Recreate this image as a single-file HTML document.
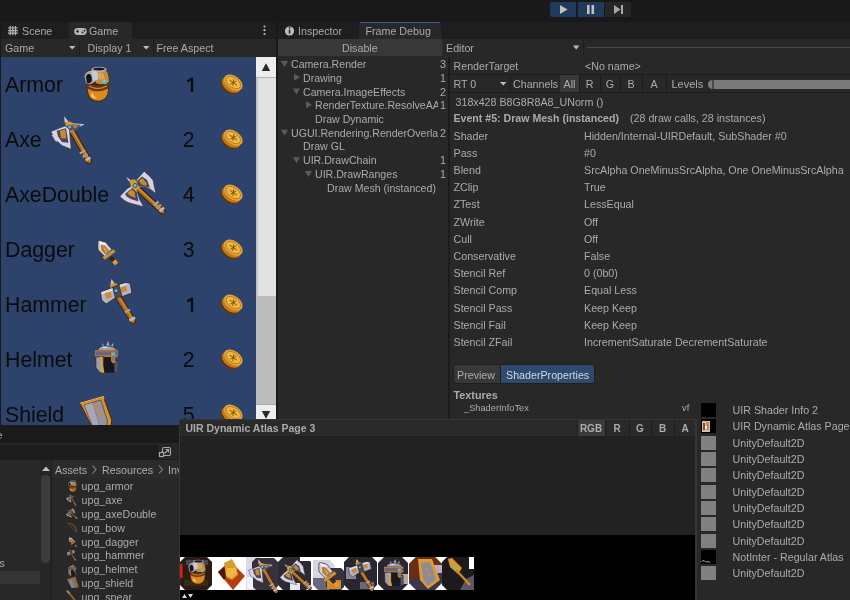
<!DOCTYPE html>
<html><head><meta charset="utf-8">
<style>
*{margin:0;padding:0;box-sizing:border-box}
html,body{width:850px;height:600px;overflow:hidden;background:#191919;font-family:"Liberation Sans",sans-serif;color:#ababab}
#w{position:absolute;left:0;top:0;width:850px;height:600px;overflow:hidden;will-change:transform}
.a{position:absolute}
.t{position:absolute;white-space:nowrap;line-height:1}
svg{position:absolute;left:0;top:0;overflow:visible}
</style></head><body><div id="w">
<div class="a" style="left:550px;top:2px;width:26px;height:15px;background:#1f3a5c;border-radius:2px 0 0 2px"></div>
<div class="a" style="left:578px;top:2px;width:26px;height:15px;background:#1f3a5c"></div>
<div class="a" style="left:605px;top:2px;width:26px;height:15px;background:#262626;border-radius:0 2px 2px 0"></div>
<svg width="850" height="20">
<path d="M560 5 L567.5 9.5 L560 14 Z" fill="#c0c0c0"/>
<rect x="587" y="5" width="2.6" height="9" fill="#c0c0c0"/><rect x="591.5" y="5" width="2.6" height="9" fill="#c0c0c0"/>
<path d="M614 5 L620.5 9.5 L614 14 Z" fill="#a8a8a8"/><rect x="621" y="5" width="2" height="9" fill="#a8a8a8"/>
</svg>
<div class="a" style="left:1px;top:22px;width:275px;height:17px;background:#1e1e1e;border-radius:3px 3px 0 0"></div>
<div class="a" style="left:69px;top:22px;width:63px;height:17px;background:#282828;border-radius:3px 3px 0 0"></div>
<div class="t" style="left:22px;top:26px;font-size:10.7px">Scene</div>
<div class="t" style="left:89px;top:26px;font-size:10.7px">Game</div>
<div class="a" style="left:1px;top:39px;width:275px;height:18px;background:#282828"></div>
<div class="a" style="left:79px;top:39px;width:1px;height:18px;background:#1e1e1e"></div>
<div class="a" style="left:153px;top:39px;width:1px;height:18px;background:#1e1e1e"></div>
<div class="t" style="left:5px;top:43px;font-size:10.7px">Game</div>
<div class="t" style="left:87.5px;top:43px;font-size:10.7px">Display 1</div>
<div class="t" style="left:156.5px;top:43px;font-size:10.7px">Free Aspect</div>
<svg width="850" height="60">
<g stroke="#b4b4b4" stroke-width="1.2" fill="none">
<path d="M10.2 26 V35.2 M12.8 26 V35.2 M15.5 26 V35.2 M8 28 H17.8 M8 30.6 H17.8 M8 33.2 H17.8"/>
</g>
<rect x="74.2" y="28" width="12.5" height="6.9" rx="3.45" fill="#b4b4b4"/>
<path d="M76 31.3 H79 M77.5 29.8 V32.8" stroke="#282828" stroke-width="1"/>
<circle cx="84.4" cy="30.6" r="0.9" fill="#282828"/><circle cx="82.6" cy="32.4" r="0.9" fill="#282828"/>
<circle cx="264.5" cy="26.5" r="1.1" fill="#bdbdbd"/><circle cx="264.5" cy="30.2" r="1.1" fill="#bdbdbd"/><circle cx="264.5" cy="34" r="1.1" fill="#bdbdbd"/>
<path d="M69 46 H75.5 L72.25 49.5 Z" fill="#bdbdbd"/>
<path d="M143 46 H149.5 L146.25 49.5 Z" fill="#bdbdbd"/>
</svg>
<div class="a" style="left:1px;top:57px;width:255px;height:368px;background:#2e436c"></div>
<div class="a" style="left:256px;top:57px;width:20px;height:368px;background:#bcbcbc"></div>
<div class="a" style="left:256px;top:57px;width:20px;height:20px;background:#eeeeee"></div>
<div class="a" style="left:256px;top:77px;width:20px;height:1px;background:#b4b4b4"></div>
<div class="a" style="left:256px;top:78px;width:20px;height:218px;background:#e2e2e2"></div>
<div class="a" style="left:256px;top:78px;width:1.5px;height:218px;background:#c4c4c4"></div>
<div class="a" style="left:256px;top:404px;width:20px;height:1px;background:#a8a8a8"></div>
<div class="a" style="left:256px;top:405px;width:20px;height:20px;background:#eeeeee"></div>
<svg width="850" height="600">
<path d="M261.8 71 L266 63.2 L270.2 71 Z" fill="#2a2a2a"/>
<path d="M261.8 411 L270.2 411 L266 418.8 Z" fill="#2a2a2a"/>
</svg>
<div class="a" style="left:1px;top:57px;width:255px;height:368px;overflow:hidden">
<div class="t" style="left:4px;top:18px;font-size:21.3px;color:#0b0b0b">Armor</div>
<svg width="850" height="600" style="left:-1px;top:-57px"><path d="M192 92 V78.6 L187.3 81.4" stroke="#0b0b0b" stroke-width="2.3" fill="none" stroke-linejoin="round"/></svg>
<div class="t" style="left:4px;top:73px;font-size:21.3px;color:#0b0b0b">Axe</div>
<div class="t" style="right:61.5px;top:73px;font-size:21.3px;color:#0b0b0b">2</div>
<div class="t" style="left:4px;top:128px;font-size:21.3px;color:#0b0b0b">AxeDouble</div>
<div class="t" style="right:61.5px;top:128px;font-size:21.3px;color:#0b0b0b">4</div>
<div class="t" style="left:4px;top:183px;font-size:21.3px;color:#0b0b0b">Dagger</div>
<div class="t" style="right:61.5px;top:183px;font-size:21.3px;color:#0b0b0b">3</div>
<div class="t" style="left:4px;top:238px;font-size:21.3px;color:#0b0b0b">Hammer</div>
<svg width="850" height="600" style="left:-1px;top:-57px"><path d="M192 312 V298.6 L187.3 301.4" stroke="#0b0b0b" stroke-width="2.3" fill="none" stroke-linejoin="round"/></svg>
<div class="t" style="left:4px;top:293px;font-size:21.3px;color:#0b0b0b">Helmet</div>
<div class="t" style="right:61.5px;top:293px;font-size:21.3px;color:#0b0b0b">2</div>
<div class="t" style="left:4px;top:348px;font-size:21.3px;color:#0b0b0b">Shield</div>
<div class="t" style="right:61.5px;top:348px;font-size:21.3px;color:#0b0b0b">5</div>
<svg width="255" height="368"><g transform="translate(-1,-57)"><g transform="translate(232.3,83.6)">
<g transform="translate(-2.2,2.8) rotate(35)"><ellipse rx="10.4" ry="6.6" fill="#6a3408"/></g>
<g transform="translate(-1.1,1.2) rotate(35)"><ellipse rx="10.4" ry="6.6" fill="#c27c1c"/></g>
<g transform="translate(1,-1) rotate(35)"><ellipse rx="10.4" ry="6.6" fill="#e4a838"/><ellipse rx="8.2" ry="4.9" fill="#f0b840" stroke="#b47418" stroke-width="0.8"/>
<path d="M-4.5 0 L4.5 0 M-1.5 -3 L1.5 3 M1.5 -3 L-1.5 3" stroke="#7a4a10" stroke-width="0.85"/></g>
</g><g transform="translate(232.3,138.6)">
<g transform="translate(-2.2,2.8) rotate(35)"><ellipse rx="10.4" ry="6.6" fill="#6a3408"/></g>
<g transform="translate(-1.1,1.2) rotate(35)"><ellipse rx="10.4" ry="6.6" fill="#c27c1c"/></g>
<g transform="translate(1,-1) rotate(35)"><ellipse rx="10.4" ry="6.6" fill="#e4a838"/><ellipse rx="8.2" ry="4.9" fill="#f0b840" stroke="#b47418" stroke-width="0.8"/>
<path d="M-4.5 0 L4.5 0 M-1.5 -3 L1.5 3 M1.5 -3 L-1.5 3" stroke="#7a4a10" stroke-width="0.85"/></g>
</g><g transform="translate(232.3,193.6)">
<g transform="translate(-2.2,2.8) rotate(35)"><ellipse rx="10.4" ry="6.6" fill="#6a3408"/></g>
<g transform="translate(-1.1,1.2) rotate(35)"><ellipse rx="10.4" ry="6.6" fill="#c27c1c"/></g>
<g transform="translate(1,-1) rotate(35)"><ellipse rx="10.4" ry="6.6" fill="#e4a838"/><ellipse rx="8.2" ry="4.9" fill="#f0b840" stroke="#b47418" stroke-width="0.8"/>
<path d="M-4.5 0 L4.5 0 M-1.5 -3 L1.5 3 M1.5 -3 L-1.5 3" stroke="#7a4a10" stroke-width="0.85"/></g>
</g><g transform="translate(232.3,248.6)">
<g transform="translate(-2.2,2.8) rotate(35)"><ellipse rx="10.4" ry="6.6" fill="#6a3408"/></g>
<g transform="translate(-1.1,1.2) rotate(35)"><ellipse rx="10.4" ry="6.6" fill="#c27c1c"/></g>
<g transform="translate(1,-1) rotate(35)"><ellipse rx="10.4" ry="6.6" fill="#e4a838"/><ellipse rx="8.2" ry="4.9" fill="#f0b840" stroke="#b47418" stroke-width="0.8"/>
<path d="M-4.5 0 L4.5 0 M-1.5 -3 L1.5 3 M1.5 -3 L-1.5 3" stroke="#7a4a10" stroke-width="0.85"/></g>
</g><g transform="translate(232.3,303.6)">
<g transform="translate(-2.2,2.8) rotate(35)"><ellipse rx="10.4" ry="6.6" fill="#6a3408"/></g>
<g transform="translate(-1.1,1.2) rotate(35)"><ellipse rx="10.4" ry="6.6" fill="#c27c1c"/></g>
<g transform="translate(1,-1) rotate(35)"><ellipse rx="10.4" ry="6.6" fill="#e4a838"/><ellipse rx="8.2" ry="4.9" fill="#f0b840" stroke="#b47418" stroke-width="0.8"/>
<path d="M-4.5 0 L4.5 0 M-1.5 -3 L1.5 3 M1.5 -3 L-1.5 3" stroke="#7a4a10" stroke-width="0.85"/></g>
</g><g transform="translate(232.3,358.6)">
<g transform="translate(-2.2,2.8) rotate(35)"><ellipse rx="10.4" ry="6.6" fill="#6a3408"/></g>
<g transform="translate(-1.1,1.2) rotate(35)"><ellipse rx="10.4" ry="6.6" fill="#c27c1c"/></g>
<g transform="translate(1,-1) rotate(35)"><ellipse rx="10.4" ry="6.6" fill="#e4a838"/><ellipse rx="8.2" ry="4.9" fill="#f0b840" stroke="#b47418" stroke-width="0.8"/>
<path d="M-4.5 0 L4.5 0 M-1.5 -3 L1.5 3 M1.5 -3 L-1.5 3" stroke="#7a4a10" stroke-width="0.85"/></g>
</g><g transform="translate(232.3,413.6)">
<g transform="translate(-2.2,2.8) rotate(35)"><ellipse rx="10.4" ry="6.6" fill="#6a3408"/></g>
<g transform="translate(-1.1,1.2) rotate(35)"><ellipse rx="10.4" ry="6.6" fill="#c27c1c"/></g>
<g transform="translate(1,-1) rotate(35)"><ellipse rx="10.4" ry="6.6" fill="#e4a838"/><ellipse rx="8.2" ry="4.9" fill="#f0b840" stroke="#b47418" stroke-width="0.8"/>
<path d="M-4.5 0 L4.5 0 M-1.5 -3 L1.5 3 M1.5 -3 L-1.5 3" stroke="#7a4a10" stroke-width="0.85"/></g>
</g>
<path d="M86 76 Q84 72 89 70.5 L92 68 Q99 66 106 68 L107 71.5 Q110 75 109.5 82 L108.5 92 Q106 101.8 98 101.8 Q89 101.5 87.5 94 L86.5 88 Z" fill="#4a2606"/>
<path d="M95 71 L106 70.5 Q109 74 109 82 Q101 86 96 83 Z" fill="#c48a3c"/>
<path d="M97 73 L103 72.5 L105 79 L99.5 80 Z" fill="#dcaa60" opacity="0.8"/>
<path d="M86.5 82 Q97 90 109 82 L108.6 87.5 Q97 95 87 87.5 Z" fill="#6a3a10"/>
<path d="M87.4 88.5 Q97 94 108.3 88.5 L107.3 94 Q105 100.8 98 100.8 Q90.5 100.5 88.8 94.5 Z" fill="#dc8a20"/>
<path d="M92 92 Q94 97 97 98 Q93 99 91 96 Z" fill="#f8c878"/>
<path d="M89 86 Q97 91 107 86" stroke="#f0b050" stroke-width="0.8" fill="none"/>
<path d="M84.5 76.5 Q85 71.5 91 70.5 L97.5 71.5 L98 79.5 Q94 83 91 84 L86 83.5 Z" fill="#a4a4b2"/>
<path d="M91 70.5 L97.5 71.5 L98 79.5 Q95 81 93 80 Z" fill="#c8c8d4"/>
<path d="M86 77 Q86.5 73.5 90 74 Q92.2 76 91.8 81 Q90.5 83.8 87 83.2 Z" fill="#141418"/>
<ellipse cx="99" cy="69.3" rx="7.6" ry="2.6" fill="#b4b4c0"/>
<ellipse cx="99" cy="69" rx="6" ry="1.5" fill="#18181c"/>
<circle cx="104.8" cy="81.6" r="2.7" fill="#c8a050"/>
<circle cx="104.8" cy="81.6" r="2.1" fill="#3ab8e8"/>
<circle cx="104.2" cy="81" r="0.8" fill="#a8ecff"/>
<path d="M72 131 L89 161" stroke="#2a1608" stroke-width="5.800000000000001" stroke-linecap="round"/><path d="M72 131 L89 161" stroke="#a8681c" stroke-width="4.4" stroke-linecap="round"/><path d="M72.4 130.5 L89.4 160.5" stroke="#d8953a" stroke-width="1.1" stroke-linecap="round"/><path d="M69.5 131.5 L75.5 128" stroke="#d89a30" stroke-width="3" stroke-linecap="butt"/><path d="M79.8 153.5 L85.3 150.3" stroke="#a0a0b0" stroke-width="2.2" stroke-linecap="butt"/><path d="M82.8 157 L87.5 154" stroke="#c09050" stroke-width="3" stroke-linecap="butt"/><path d="M85.5 160.5 L90.5 157.5" stroke="#b8b8c4" stroke-width="2.6" stroke-linecap="butt"/>
<path d="M64.2 116.3 L68.6 121.8 L64.6 122.6 Z" fill="#c8c8d4"/>
<path d="M68 123.5 L83.5 124.5 L76 129.8 L70 131 Z" fill="#5a5468"/>
<path d="M68 123.5 L83.5 124.5 L80 126" stroke="#c8c8d8" stroke-width="1" fill="none"/>
<path d="M72.5 125.2 L78.5 125.6 L74.5 128.5 Z" fill="#c88a2c"/>
<path d="M50.7 131.6 L64.7 126 L69.3 128.3 L71.2 149.3 L61.9 145.6 L58 142 L55.5 141.5 L54.4 140 L53 137.5 L51.5 135.5 L52.5 134.5 Z" fill="#d6d2e2" stroke="#2a2636" stroke-width="0.6"/>
<path d="M56.7 130.7 L66 128.3 L68.4 142.8 L61.9 141.9 L58.1 136.3 Z" fill="#4a4558"/>
<path d="M59.8 130.8 L65.3 129.6 L66.2 138.6 L61.2 138.2 Z" fill="#c88a2c"/>
<path d="M65 122.5 Q69 120.5 72.8 123 L71.8 126.8 L66 126.2 Z" fill="#d89a30"/>
<circle cx="69.8" cy="127" r="2.3" fill="#2a2a3a"/>
<circle cx="69.8" cy="127" r="1.7" fill="#40c8f0"/>
<path d="M137 188 L162.5 211.5" stroke="#2a1608" stroke-width="5.800000000000001" stroke-linecap="round"/><path d="M137 188 L162.5 211.5" stroke="#a8681c" stroke-width="4.4" stroke-linecap="round"/><path d="M137.4 187.5 L162.9 211.0" stroke="#d8953a" stroke-width="1.1" stroke-linecap="round"/><path d="M134.5 189.5 L140.5 185.5" stroke="#d89a30" stroke-width="3" stroke-linecap="butt"/><path d="M154 205.5 L158.5 201.5" stroke="#a0a0b0" stroke-width="2.4" stroke-linecap="butt"/><path d="M156.5 208.5 L161 204.5" stroke="#c09050" stroke-width="3" stroke-linecap="butt"/><path d="M159.5 211.5 L164 207.5" stroke="#b8b8c4" stroke-width="2.6" stroke-linecap="butt"/>
<path d="M126 176.8 L130.7 179.9 L129 181.6 Z" fill="#c8c8d4"/>
<path d="M136.4 179.9 L144.2 171.2 L146 173 L148.1 174.7 L150 176.5 L153.3 180.7 L154 185 L155.9 193.7 L150.7 189.4 L144.6 186.8 L139.4 186.8 Z" fill="#d6d2e2" stroke="#2a2636" stroke-width="0.6"/>
<path d="M137.2 180.7 L142 176.4 L147.2 179.9 L149.8 187.7 L143.7 186.4 L139 185.9 Z" fill="#4a4558"/>
<path d="M139 180.7 L142.4 178.1 L146.8 183.3 L146.3 185.9 L141.1 184.2 Z" fill="#c88a2c"/>
<path d="M119.9 196.3 L127.3 188.5 L132.5 185.5 L136.8 190.3 L139.4 198.9 L143.7 206.7 L133.3 204.1 L128 202.5 L124.7 200.7 L122 198.5 Z" fill="#d6d2e2" stroke="#2a2636" stroke-width="0.6"/>
<path d="M125.1 193.7 L132.5 187.7 L136.8 192 L138.5 201.5 L130.7 198.9 L126.4 196.3 Z" fill="#4a4558"/>
<path d="M127.3 192.9 L131.6 189.4 L134.6 192 L135.5 198.1 L129.9 195.5 Z" fill="#c88a2c"/>
<path d="M129.5 181 Q133 178.5 136.5 180.5 L138.5 188 L135 190.5 L131 187 Z" fill="#d89a30"/>
<circle cx="135.1" cy="185.5" r="2.3" fill="#2a2a3a"/>
<circle cx="135.1" cy="185.5" r="1.7" fill="#40c8f0"/>

<path d="M98 241.1 L99.5 240.6 L105.7 242.2 L111.8 249.3 L104.7 256.5 L98.8 250.6 L97.8 248.3 Z" fill="#d0d0dc" stroke="#2a2636" stroke-width="0.7"/>
<path d="M99 241.5 L105.4 243 L106 245 L100.5 244.2 Z" fill="#f4f4fa"/>
<path d="M100.9 245.1 L104.7 245.6 L109.5 250.9 L105.7 254.7 L101.5 250.4 Z" fill="#b8782a"/>
<path d="M103 247 L105 247.5 L107.5 251 L105.5 253 Z" fill="#e0a040"/>
<path d="M110.5 257.3 L114.5 261.3" stroke="#2a2018" stroke-width="3.8"/>
<path d="M111 257.8 L114 260.8" stroke="#7a6040" stroke-width="1" stroke-dasharray="1 1"/>
<path d="M102.5 257.3 L113.2 249.3 L115.6 251.7 L104.7 259.8 Z" fill="#d89028"/>
<circle cx="108.1" cy="253.9" r="1.4" fill="#4090e0"/>
<path d="M112.1 262 L115.5 259.3 L118.2 262.5 L115 265.4 Z" fill="#e09a30"/>
<path d="M117 295 L133 321" stroke="#2a1608" stroke-width="6.0" stroke-linecap="round"/><path d="M117 295 L133 321" stroke="#a8681c" stroke-width="4.6" stroke-linecap="round"/><path d="M117.4 294.5 L133.4 320.5" stroke="#d8953a" stroke-width="1.1" stroke-linecap="round"/><path d="M116 297 L122 293.5" stroke="#d89a30" stroke-width="3" stroke-linecap="butt"/><path d="M125 312.5 L130 309.5" stroke="#a0a0b0" stroke-width="2.4" stroke-linecap="butt"/><path d="M129.5 320.5 L135 317.5" stroke="#b8b8c4" stroke-width="3" stroke-linecap="butt"/>
<path d="M111.5 279 L114.7 283.5 L110.6 284 Z" fill="#c8c8d4"/>
<path d="M110 284.5 Q114 282.5 117.5 284 L118 288 L111 289 Z" fill="#d89a30"/>
<path d="M100.5 292 L113 287.5 L116 297.5 L106 304 L101.5 300 Z" fill="#b4b2c4" stroke="#24222e" stroke-width="0.8"/>
<path d="M101 292.3 L112.8 288 L113.6 290.4 L102 294.6 Z" fill="#dcdce8"/>
<path d="M118 285 L125 282.8 L130.2 283.5 L132 293 L121 297 Z" fill="#b4b2c4" stroke="#24222e" stroke-width="0.8"/>
<path d="M118.4 285.2 L125 283.2 L130 283.8 L119 287.6 Z" fill="#dcdce8"/>
<path d="M112.5 287 L119 284.5 L122 296 L115.5 298.5 Z" fill="#4a4858" stroke="#24222e" stroke-width="0.6"/>
<path d="M104.5 293.5 L110.5 291.5 L112 297 L106.5 299 Z" fill="#d08a28"/>
<path d="M120.5 287.5 L126 285.8 L127.2 290.8 L122 292.5 Z" fill="#d08a28"/>
<circle cx="116" cy="290.7" r="2.2" fill="#2a2a3a"/>
<circle cx="116" cy="290.7" r="1.6" fill="#40c8f0"/>

<path d="M102 348 L102.5 343 L105 347.5 L108.3 341 L110 347 L113.3 342.7 L113 348 Z" fill="#a8a8b8"/>
<path d="M97.5 350.5 Q99 345.5 106.5 345.8 Q115 346 117 350.5 Z" fill="#9c9aac" stroke="#1e1c28" stroke-width="0.7"/>
<path d="M101 347 Q106 346 109 347.5 L104 348.5 Z" fill="#d0d0dc"/>
<rect x="95" y="350.2" width="22.8" height="6.6" fill="#c88428"/>
<rect x="95.5" y="351.3" width="21.8" height="4.2" fill="#6a6482"/>
<path d="M95.7 356.8 L103.7 356.8 L103.7 365 L105 372.7 L100 372.7 L96 368 Z" fill="#9c9cae" stroke="#1e1c28" stroke-width="0.7"/>
<path d="M99.7 356.8 L102.5 356.8 L103 362 L102 366 L104.5 372.7 L101.5 372.7 L100 367 L101 362 Z" fill="#e0a020"/>
<path d="M103.7 357.3 L114 357.3 L117.7 360.7 L117.7 371 L114 372.7 L104.5 372.7 L103.7 366 Z" fill="#17171d"/>
<path d="M114.3 361 L117.7 360.7 L117.7 371.5 L114.5 372.5 Z" fill="#55526a"/>
<path d="M111.2 352 L115.2 352 L115.5 362 L113 363.5 L111 361 Z" fill="#c88428"/>
<path d="M112 353.5 L114.6 353.5 L114.6 360.5 L113 361.8 L112 360 Z" fill="#7a7490"/>
<circle cx="113.3" cy="354.3" r="1.5" fill="#40c8f0"/>

<path d="M80 403.3 L103.3 396.5 L111.7 420 L111 426 L91.7 426 Z" fill="#d89028" stroke="#3a2008" stroke-width="0.8"/>
<path d="M80 403.3 L103.3 396.5 L104 399" stroke="#f8c060" stroke-width="1" fill="none"/>
<path d="M84.2 405 L100.8 400 L107.5 420.8 L106.5 426 L92.5 426 Z" fill="#9492a6" stroke="#3a2a1a" stroke-width="0.6"/>
<path d="M92.5 402.5 L99.5 426" stroke="#7a788a" stroke-width="0.9"/>
<path d="M84.6 405.3 L92.5 402.8 L99 426 L92.8 426 Z" fill="#a8a6b8"/>
<circle cx="96.7" cy="407.5" r="2" fill="#d08a28"/>
<circle cx="100" cy="415" r="2" fill="#d08a28"/>
</g></svg>
</div>
<div class="a" style="left:278px;top:22px;width:572px;height:17px;background:#1e1e1e;border-radius:3px 0 0 0"></div>
<div class="a" style="left:359px;top:22px;width:82px;height:17px;background:#282828;border-radius:3px 3px 0 0"></div>
<div class="a" style="left:360px;top:22px;width:80px;height:1.2px;background:#30609a"></div>
<svg width="850" height="60">
<circle cx="289.5" cy="31" r="4.6" fill="#bdbdbd"/>
<rect x="288.8" y="29.6" width="1.5" height="4" fill="#1e1e1e"/><circle cx="289.55" cy="27.8" r="0.85" fill="#1e1e1e"/>
</svg>
<div class="t" style="left:298px;top:26px;font-size:10.7px">Inspector</div>
<div class="t" style="left:365.5px;top:26px;font-size:10.7px">Frame Debug</div>
<div class="a" style="left:278px;top:39px;width:572px;height:18px;background:#282828"></div>
<div class="a" style="left:278px;top:39px;width:164px;height:17px;background:#383838"></div>
<div class="t" style="left:342px;top:43px;font-size:10.7px">Disable</div>
<div class="t" style="left:446px;top:43px;font-size:10.7px">Editor</div>
<div class="a" style="left:583px;top:39px;width:1px;height:17px;background:#1e1e1e"></div>
<div class="a" style="left:586.5px;top:46.5px;width:264px;height:1.2px;background:#484848"></div>
<svg width="850" height="60"><path d="M573 45.6 H579.4 L576.2 49.4 Z" fill="#bdbdbd"/></svg>
<div class="a" style="left:278px;top:57px;width:170px;height:363px;background:#282828"></div>
<div class="a" style="left:448px;top:57px;width:2px;height:363px;background:#1c1c1c"></div>
<div class="a" style="left:278px;top:57px;width:160px;height:363px;overflow:hidden">
<div class="t" style="left:13px;top:2px;font-size:10.6px">Camera.Render</div>
<div class="t" style="left:25px;top:16px;font-size:10.6px">Drawing</div>
<div class="t" style="left:25px;top:30px;font-size:10.6px">Camera.ImageEffects</div>
<div class="t" style="left:37px;top:43px;font-size:10.6px">RenderTexture.ResolveAA</div>
<div class="t" style="left:37px;top:57px;font-size:10.6px">Draw Dynamic</div>
<div class="t" style="left:13px;top:71px;font-size:10.6px">UGUI.Rendering.RenderOverlays</div>
<div class="t" style="left:25px;top:84px;font-size:10.6px">Draw GL</div>
<div class="t" style="left:25px;top:98px;font-size:10.6px">UIR.DrawChain</div>
<div class="t" style="left:37px;top:112px;font-size:10.6px">UIR.DrawRanges</div>
<div class="t" style="left:49px;top:126px;font-size:10.6px">Draw Mesh (instanced)</div>
</div>
<div class="t" style="right:404px;top:59px;font-size:10.7px">3</div>
<div class="t" style="right:404px;top:73px;font-size:10.7px">1</div>
<div class="t" style="right:404px;top:87px;font-size:10.7px">2</div>
<div class="t" style="right:404px;top:100px;font-size:10.7px">1</div>
<div class="t" style="right:404px;top:128px;font-size:10.7px">2</div>
<div class="t" style="right:404px;top:155px;font-size:10.7px">1</div>
<div class="t" style="right:404px;top:169px;font-size:10.7px">1</div>
<svg width="850" height="600"><path d="M281 61.0 H288 L284.5 67.0 Z" fill="#5a5a5a"/><path d="M294 73.75 L300 77.25 L294 80.75 Z" fill="#5a5a5a"/><path d="M293 88.5 H300 L296.5 94.5 Z" fill="#5a5a5a"/><path d="M306 101.25 L312 104.75 L306 108.25 Z" fill="#5a5a5a"/><path d="M281 129.75 H288 L284.5 135.75 Z" fill="#5a5a5a"/><path d="M293 157.25 H300 L296.5 163.25 Z" fill="#5a5a5a"/><path d="M305 171.0 H312 L308.5 177.0 Z" fill="#5a5a5a"/></svg>
<div class="a" style="left:450px;top:57px;width:400px;height:543px;background:#282828"></div>
<div class="a" style="left:450px;top:74px;width:400px;height:1px;background:#1c1c1c"></div>
<div class="a" style="left:450px;top:92px;width:400px;height:1px;background:#1c1c1c"></div>
<div class="t" style="left:453.5px;top:61px;font-size:10.7px">RenderTarget</div>
<div class="t" style="left:585px;top:61px;font-size:10.7px">&lt;No name&gt;</div>
<div class="t" style="left:453.5px;top:79px;font-size:10.7px">RT 0</div>
<svg width="850" height="600"><path d="M500 82 H506.5 L503.25 85.5 Z" fill="#bdbdbd"/></svg>
<div class="a" style="left:510px;top:75px;width:1px;height:17px;background:#1c1c1c"></div>
<div class="t" style="left:513px;top:79px;font-size:10.7px">Channels</div>
<div class="a" style="left:560px;top:75px;width:19px;height:17px;background:#3a3a3a"></div>
<div class="a" style="left:579px;top:75px;width:1px;height:17px;background:#1c1c1c"></div>
<div class="t" style="left:560px;width:19px;text-align:center;top:79px;font-size:10.7px">All</div>
<div class="a" style="left:600px;top:75px;width:1px;height:17px;background:#1c1c1c"></div>
<div class="t" style="left:579px;width:21px;text-align:center;top:79px;font-size:10.7px">R</div>
<div class="a" style="left:620px;top:75px;width:1px;height:17px;background:#1c1c1c"></div>
<div class="t" style="left:600px;width:20px;text-align:center;top:79px;font-size:10.7px">G</div>
<div class="a" style="left:642px;top:75px;width:1px;height:17px;background:#1c1c1c"></div>
<div class="t" style="left:620px;width:22px;text-align:center;top:79px;font-size:10.7px">B</div>
<div class="a" style="left:666px;top:75px;width:1px;height:17px;background:#1c1c1c"></div>
<div class="t" style="left:642px;width:24px;text-align:center;top:79px;font-size:10.7px">A</div>
<div class="t" style="left:671.5px;top:79px;font-size:11px">Levels</div>
<div class="a" style="left:708px;top:80px;width:142px;height:9px;background:#7a7a7a;border-radius:4.5px 0 0 4.5px"></div>
<div class="a" style="left:712px;top:80px;width:1.5px;height:9px;background:#4a4a4a"></div>
<div class="t" style="left:455.5px;top:97px;font-size:10.7px">318x428 B8G8R8A8_UNorm ()</div>
<div class="t" style="left:453.5px;top:113px;font-size:10.6px;font-weight:bold">Event #5: Draw Mesh (instanced)</div>
<div class="t" style="left:630px;top:113px;font-size:10.7px">(28 draw calls, 28 instances)</div>
<div class="t" style="left:453.5px;top:131px;font-size:10.7px">Shader</div>
<div class="t" style="left:584px;top:131px;font-size:10.7px">Hidden/Internal-UIRDefault, SubShader #0</div>
<div class="t" style="left:453.5px;top:148px;font-size:10.7px">Pass</div>
<div class="t" style="left:584px;top:148px;font-size:10.7px">#0</div>
<div class="t" style="left:453.5px;top:165px;font-size:10.7px">Blend</div>
<div class="t" style="left:584px;top:165px;font-size:10.7px">SrcAlpha OneMinusSrcAlpha, One OneMinusSrcAlpha</div>
<div class="t" style="left:453.5px;top:182px;font-size:10.7px">ZClip</div>
<div class="t" style="left:584px;top:182px;font-size:10.7px">True</div>
<div class="t" style="left:453.5px;top:199px;font-size:10.7px">ZTest</div>
<div class="t" style="left:584px;top:199px;font-size:10.7px">LessEqual</div>
<div class="t" style="left:453.5px;top:217px;font-size:10.7px">ZWrite</div>
<div class="t" style="left:584px;top:217px;font-size:10.7px">Off</div>
<div class="t" style="left:453.5px;top:234px;font-size:10.7px">Cull</div>
<div class="t" style="left:584px;top:234px;font-size:10.7px">Off</div>
<div class="t" style="left:453.5px;top:251px;font-size:10.7px">Conservative</div>
<div class="t" style="left:584px;top:251px;font-size:10.7px">False</div>
<div class="t" style="left:453.5px;top:268px;font-size:10.7px">Stencil Ref</div>
<div class="t" style="left:584px;top:268px;font-size:10.7px">0 (0b0)</div>
<div class="t" style="left:453.5px;top:285px;font-size:10.7px">Stencil Comp</div>
<div class="t" style="left:584px;top:285px;font-size:10.7px">Equal Less</div>
<div class="t" style="left:453.5px;top:303px;font-size:10.7px">Stencil Pass</div>
<div class="t" style="left:584px;top:303px;font-size:10.7px">Keep Keep</div>
<div class="t" style="left:453.5px;top:320px;font-size:10.7px">Stencil Fail</div>
<div class="t" style="left:584px;top:320px;font-size:10.7px">Keep Keep</div>
<div class="t" style="left:453.5px;top:337px;font-size:10.7px">Stencil ZFail</div>
<div class="t" style="left:584px;top:337px;font-size:10.7px">IncrementSaturate DecrementSaturate</div>
<div class="a" style="left:453px;top:364px;width:142px;height:20px;background:#1f1f1f;border-radius:3px"></div>
<div class="a" style="left:454px;top:365px;width:46px;height:18px;background:#383838;border-radius:2px 0 0 2px"></div>
<div class="a" style="left:501px;top:365px;width:93px;height:18px;background:#2e4a6c;border-radius:0 2px 2px 0"></div>
<div class="t" style="left:457px;top:370px;font-size:10.7px">Preview</div>
<div class="t" style="left:506px;top:370px;font-size:10.7px;color:#d0d8e0">ShaderProperties</div>
<div class="t" style="left:453.5px;top:390px;font-size:10.8px;font-weight:bold">Textures</div>
<div class="t" style="left:464px;top:404px;font-size:9.25px">_ShaderInfoTex</div>
<div class="t" style="left:682px;top:404px;font-size:9.25px">vf</div>
<div class="a" style="left:701px;top:403px;width:15px;height:14px;background:#000"></div>
<div class="t" style="left:732.5px;top:405px;font-size:10.7px">UIR Shader Info 2</div>
<div class="a" style="left:701px;top:419px;width:15px;height:14px;background:#000"></div>
<div class="t" style="left:732.5px;top:421px;font-size:10.7px">UIR Dynamic Atlas Page 3</div>
<div class="a" style="left:701px;top:436px;width:15px;height:14px;background:#808080"></div>
<div class="t" style="left:732.5px;top:438px;font-size:10.7px">UnityDefault2D</div>
<div class="a" style="left:701px;top:452px;width:15px;height:14px;background:#808080"></div>
<div class="t" style="left:732.5px;top:454px;font-size:10.7px">UnityDefault2D</div>
<div class="a" style="left:701px;top:468px;width:15px;height:14px;background:#808080"></div>
<div class="t" style="left:732.5px;top:470px;font-size:10.7px">UnityDefault2D</div>
<div class="a" style="left:701px;top:485px;width:15px;height:14px;background:#808080"></div>
<div class="t" style="left:732.5px;top:487px;font-size:10.7px">UnityDefault2D</div>
<div class="a" style="left:701px;top:501px;width:15px;height:14px;background:#808080"></div>
<div class="t" style="left:732.5px;top:503px;font-size:10.7px">UnityDefault2D</div>
<div class="a" style="left:701px;top:517px;width:15px;height:14px;background:#808080"></div>
<div class="t" style="left:732.5px;top:519px;font-size:10.7px">UnityDefault2D</div>
<div class="a" style="left:701px;top:534px;width:15px;height:14px;background:#808080"></div>
<div class="t" style="left:732.5px;top:536px;font-size:10.7px">UnityDefault2D</div>
<div class="a" style="left:701px;top:550px;width:15px;height:14px;background:#000"></div>
<div class="t" style="left:732.5px;top:552px;font-size:10.7px">NotInter - Regular Atlas</div>
<div class="a" style="left:701px;top:566px;width:15px;height:14px;background:#808080"></div>
<div class="t" style="left:732.5px;top:568px;font-size:10.7px">UnityDefault2D</div>
<div class="a" style="left:702px;top:421px;width:8px;height:11px;background:#d8c0a8"></div>
<div class="a" style="left:703px;top:423px;width:2px;height:7px;background:#8a4a20"></div>
<div class="a" style="left:706px;top:422px;width:3px;height:8px;background:#c08850"></div>
<div class="a" style="left:705px;top:426px;width:2px;height:3px;background:#f4ecec"></div>
<svg width="850" height="600"><path d="M701.5 562 Q703 559 704.5 561 L706 562 L709 561.5 L710 563" stroke="#bbbbbb" stroke-width="0.8" fill="none"/></svg>
<div class="t" style="left:702px;top:599px;font-size:10.7px">Vf</div>
<div class="a" style="left:0px;top:425px;width:180px;height:18px;background:#1a1a1a"></div>
<div class="t" style="left:-3.5px;top:430px;font-size:10.7px">e</div>
<div class="a" style="left:0px;top:443px;width:180px;height:17px;background:#262626"></div>
<div class="a" style="left:0px;top:445px;width:158px;height:14px;background:#1c1c1c"></div>
<div class="a" style="left:0px;top:459px;width:180px;height:1px;background:#1c1c1c"></div>
<div class="a" style="left:0px;top:460px;width:180px;height:140px;background:#282828"></div>
<div class="a" style="left:52px;top:460px;width:128px;height:18px;background:#2b2b2b"></div>
<div class="a" style="left:51px;top:460px;width:1px;height:140px;background:#1e1e1e"></div>
<div class="a" style="left:40px;top:460px;width:11px;height:140px;background:#262626"></div>
<div class="a" style="left:41px;top:475px;width:9px;height:88px;background:#3c3c3c;border-radius:4.5px"></div>
<svg width="850" height="600">
<path d="M42 471 L46 466.5 L50 471 Z" fill="#c0c0c0"/>
<g stroke="#a8a8a8" stroke-width="1.1" fill="none"><rect x="162.5" y="447.5" width="8" height="8" rx="1.5"/><path d="M164.5 453.5 L168.5 449.5 M165.5 449.5 H168.5 V452.5"/></g>
<rect x="159.5" y="452.5" width="4" height="4" fill="#262626" stroke="#a8a8a8" stroke-width="1.1"/>
</svg>
<div class="t" style="left:-0.5px;top:558px;font-size:10.7px">s</div>
<div class="a" style="left:0px;top:571px;width:40px;height:13px;background:#353535"></div>
<div class="t" style="left:55px;top:465px;font-size:10.7px">Assets</div>
<div class="t" style="left:102px;top:465px;font-size:10.7px">Resources</div>
<div class="t" style="left:168px;top:465px;font-size:10.7px">Inventory</div>
<svg width="850" height="600"><g stroke="#8a8a8a" stroke-width="1.1" fill="none"><path d="M92.5 465.5 L96 469.5 L92.5 473.5"/><path d="M159 465.5 L162.5 469.5 L159 473.5"/></g></svg>
<div class="t" style="left:81.5px;top:481px;font-size:10.7px">upg_armor</div>
<div class="t" style="left:81.5px;top:495px;font-size:10.7px">upg_axe</div>
<div class="t" style="left:81.5px;top:509px;font-size:10.7px">upg_axeDouble</div>
<div class="t" style="left:81.5px;top:523px;font-size:10.7px">upg_bow</div>
<div class="t" style="left:81.5px;top:537px;font-size:10.7px">upg_dagger</div>
<div class="t" style="left:81.5px;top:550px;font-size:10.7px">upg_hammer</div>
<div class="t" style="left:81.5px;top:564px;font-size:10.7px">upg_helmet</div>
<div class="t" style="left:81.5px;top:578px;font-size:10.7px">upg_shield</div>
<div class="t" style="left:81.5px;top:592px;font-size:10.7px">upg_spear</div>
<svg width="850" height="600" style="opacity:0.75"><g transform="translate(39.44,457.52) scale(0.34)">
<path d="M86 76 Q84 72 89 70.5 L92 68 Q99 66 106 68 L107 71.5 Q110 75 109.5 82 L108.5 92 Q106 101.8 98 101.8 Q89 101.5 87.5 94 L86.5 88 Z" fill="#4a2606"/>
<path d="M95 71 L106 70.5 Q109 74 109 82 Q101 86 96 83 Z" fill="#c48a3c"/>
<path d="M97 73 L103 72.5 L105 79 L99.5 80 Z" fill="#dcaa60" opacity="0.8"/>
<path d="M86.5 82 Q97 90 109 82 L108.6 87.5 Q97 95 87 87.5 Z" fill="#6a3a10"/>
<path d="M87.4 88.5 Q97 94 108.3 88.5 L107.3 94 Q105 100.8 98 100.8 Q90.5 100.5 88.8 94.5 Z" fill="#dc8a20"/>
<path d="M92 92 Q94 97 97 98 Q93 99 91 96 Z" fill="#f8c878"/>
<path d="M89 86 Q97 91 107 86" stroke="#f0b050" stroke-width="0.8" fill="none"/>
<path d="M84.5 76.5 Q85 71.5 91 70.5 L97.5 71.5 L98 79.5 Q94 83 91 84 L86 83.5 Z" fill="#a4a4b2"/>
<path d="M91 70.5 L97.5 71.5 L98 79.5 Q95 81 93 80 Z" fill="#c8c8d4"/>
<path d="M86 77 Q86.5 73.5 90 74 Q92.2 76 91.8 81 Q90.5 83.8 87 83.2 Z" fill="#141418"/>
<ellipse cx="99" cy="69.3" rx="7.6" ry="2.6" fill="#b4b4c0"/>
<ellipse cx="99" cy="69" rx="6" ry="1.5" fill="#18181c"/>
<circle cx="104.8" cy="81.6" r="2.7" fill="#c8a050"/>
<circle cx="104.8" cy="81.6" r="2.1" fill="#3ab8e8"/>
<circle cx="104.2" cy="81" r="0.8" fill="#a8ecff"/>
</g><g transform="translate(53.50,465.10) scale(0.25)"><path d="M72 131 L89 161" stroke="#2a1608" stroke-width="5.800000000000001" stroke-linecap="round"/><path d="M72 131 L89 161" stroke="#a8681c" stroke-width="4.4" stroke-linecap="round"/><path d="M72.4 130.5 L89.4 160.5" stroke="#d8953a" stroke-width="1.1" stroke-linecap="round"/><path d="M69.5 131.5 L75.5 128" stroke="#d89a30" stroke-width="3" stroke-linecap="butt"/><path d="M79.8 153.5 L85.3 150.3" stroke="#a0a0b0" stroke-width="2.2" stroke-linecap="butt"/><path d="M82.8 157 L87.5 154" stroke="#c09050" stroke-width="3" stroke-linecap="butt"/><path d="M85.5 160.5 L90.5 157.5" stroke="#b8b8c4" stroke-width="2.6" stroke-linecap="butt"/>
<path d="M64.2 116.3 L68.6 121.8 L64.6 122.6 Z" fill="#c8c8d4"/>
<path d="M68 123.5 L83.5 124.5 L76 129.8 L70 131 Z" fill="#5a5468"/>
<path d="M68 123.5 L83.5 124.5 L80 126" stroke="#c8c8d8" stroke-width="1" fill="none"/>
<path d="M72.5 125.2 L78.5 125.6 L74.5 128.5 Z" fill="#c88a2c"/>
<path d="M50.7 131.6 L64.7 126 L69.3 128.3 L71.2 149.3 L61.9 145.6 L58 142 L55.5 141.5 L54.4 140 L53 137.5 L51.5 135.5 L52.5 134.5 Z" fill="#d6d2e2" stroke="#2a2636" stroke-width="0.6"/>
<path d="M56.7 130.7 L66 128.3 L68.4 142.8 L61.9 141.9 L58.1 136.3 Z" fill="#4a4558"/>
<path d="M59.8 130.8 L65.3 129.6 L66.2 138.6 L61.2 138.2 Z" fill="#c88a2c"/>
<path d="M65 122.5 Q69 120.5 72.8 123 L71.8 126.8 L66 126.2 Z" fill="#d89a30"/>
<circle cx="69.8" cy="127" r="2.3" fill="#2a2a3a"/>
<circle cx="69.8" cy="127" r="1.7" fill="#40c8f0"/>
</g><g transform="translate(34.80,463.70) scale(0.26)"><path d="M137 188 L162.5 211.5" stroke="#2a1608" stroke-width="5.800000000000001" stroke-linecap="round"/><path d="M137 188 L162.5 211.5" stroke="#a8681c" stroke-width="4.4" stroke-linecap="round"/><path d="M137.4 187.5 L162.9 211.0" stroke="#d8953a" stroke-width="1.1" stroke-linecap="round"/><path d="M134.5 189.5 L140.5 185.5" stroke="#d89a30" stroke-width="3" stroke-linecap="butt"/><path d="M154 205.5 L158.5 201.5" stroke="#a0a0b0" stroke-width="2.4" stroke-linecap="butt"/><path d="M156.5 208.5 L161 204.5" stroke="#c09050" stroke-width="3" stroke-linecap="butt"/><path d="M159.5 211.5 L164 207.5" stroke="#b8b8c4" stroke-width="2.6" stroke-linecap="butt"/>
<path d="M126 176.8 L130.7 179.9 L129 181.6 Z" fill="#c8c8d4"/>
<path d="M136.4 179.9 L144.2 171.2 L146 173 L148.1 174.7 L150 176.5 L153.3 180.7 L154 185 L155.9 193.7 L150.7 189.4 L144.6 186.8 L139.4 186.8 Z" fill="#d6d2e2" stroke="#2a2636" stroke-width="0.6"/>
<path d="M137.2 180.7 L142 176.4 L147.2 179.9 L149.8 187.7 L143.7 186.4 L139 185.9 Z" fill="#4a4558"/>
<path d="M139 180.7 L142.4 178.1 L146.8 183.3 L146.3 185.9 L141.1 184.2 Z" fill="#c88a2c"/>
<path d="M119.9 196.3 L127.3 188.5 L132.5 185.5 L136.8 190.3 L139.4 198.9 L143.7 206.7 L133.3 204.1 L128 202.5 L124.7 200.7 L122 198.5 Z" fill="#d6d2e2" stroke="#2a2636" stroke-width="0.6"/>
<path d="M125.1 193.7 L132.5 187.7 L136.8 192 L138.5 201.5 L130.7 198.9 L126.4 196.3 Z" fill="#4a4558"/>
<path d="M127.3 192.9 L131.6 189.4 L134.6 192 L135.5 198.1 L129.9 195.5 Z" fill="#c88a2c"/>
<path d="M129.5 181 Q133 178.5 136.5 180.5 L138.5 188 L135 190.5 L131 187 Z" fill="#d89a30"/>
<circle cx="135.1" cy="185.5" r="2.3" fill="#2a2a3a"/>
<circle cx="135.1" cy="185.5" r="1.7" fill="#40c8f0"/>
</g><g transform="translate(72,527.7)"><path d="M-4.5 -4.5 Q4.5 -4.5 4.5 5" stroke="#7a4a20" stroke-width="1.6" fill="none"/><path d="M-4 -4 L4 4.5" stroke="#666" stroke-width="0.6"/></g><g transform="translate(29.70,441.00) scale(0.4)">
<path d="M98 241.1 L99.5 240.6 L105.7 242.2 L111.8 249.3 L104.7 256.5 L98.8 250.6 L97.8 248.3 Z" fill="#d0d0dc" stroke="#2a2636" stroke-width="0.7"/>
<path d="M99 241.5 L105.4 243 L106 245 L100.5 244.2 Z" fill="#f4f4fa"/>
<path d="M100.9 245.1 L104.7 245.6 L109.5 250.9 L105.7 254.7 L101.5 250.4 Z" fill="#b8782a"/>
<path d="M103 247 L105 247.5 L107.5 251 L105.5 253 Z" fill="#e0a040"/>
<path d="M110.5 257.3 L114.5 261.3" stroke="#2a2018" stroke-width="3.8"/>
<path d="M111 257.8 L114 260.8" stroke="#7a6040" stroke-width="1" stroke-dasharray="1 1"/>
<path d="M102.5 257.3 L113.2 249.3 L115.6 251.7 L104.7 259.8 Z" fill="#d89028"/>
<circle cx="108.1" cy="253.9" r="1.4" fill="#4090e0"/>
<path d="M112.1 262 L115.5 259.3 L118.2 262.5 L115 265.4 Z" fill="#e09a30"/>
</g><g transform="translate(40.74,476.76) scale(0.26)"><path d="M117 295 L133 321" stroke="#2a1608" stroke-width="6.0" stroke-linecap="round"/><path d="M117 295 L133 321" stroke="#a8681c" stroke-width="4.6" stroke-linecap="round"/><path d="M117.4 294.5 L133.4 320.5" stroke="#d8953a" stroke-width="1.1" stroke-linecap="round"/><path d="M116 297 L122 293.5" stroke="#d89a30" stroke-width="3" stroke-linecap="butt"/><path d="M125 312.5 L130 309.5" stroke="#a0a0b0" stroke-width="2.4" stroke-linecap="butt"/><path d="M129.5 320.5 L135 317.5" stroke="#b8b8c4" stroke-width="3" stroke-linecap="butt"/>
<path d="M111.5 279 L114.7 283.5 L110.6 284 Z" fill="#c8c8d4"/>
<path d="M110 284.5 Q114 282.5 117.5 284 L118 288 L111 289 Z" fill="#d89a30"/>
<path d="M100.5 292 L113 287.5 L116 297.5 L106 304 L101.5 300 Z" fill="#b4b2c4" stroke="#24222e" stroke-width="0.8"/>
<path d="M101 292.3 L112.8 288 L113.6 290.4 L102 294.6 Z" fill="#dcdce8"/>
<path d="M118 285 L125 282.8 L130.2 283.5 L132 293 L121 297 Z" fill="#b4b2c4" stroke="#24222e" stroke-width="0.8"/>
<path d="M118.4 285.2 L125 283.2 L130 283.8 L119 287.6 Z" fill="#dcdce8"/>
<path d="M112.5 287 L119 284.5 L122 296 L115.5 298.5 Z" fill="#4a4858" stroke="#24222e" stroke-width="0.6"/>
<path d="M104.5 293.5 L110.5 291.5 L112 297 L106.5 299 Z" fill="#d08a28"/>
<path d="M120.5 287.5 L126 285.8 L127.2 290.8 L122 292.5 Z" fill="#d08a28"/>
<circle cx="116" cy="290.7" r="2.2" fill="#2a2a3a"/>
<circle cx="116" cy="290.7" r="1.6" fill="#40c8f0"/>
</g><g transform="translate(33.80,441.34) scale(0.36)">
<path d="M102 348 L102.5 343 L105 347.5 L108.3 341 L110 347 L113.3 342.7 L113 348 Z" fill="#a8a8b8"/>
<path d="M97.5 350.5 Q99 345.5 106.5 345.8 Q115 346 117 350.5 Z" fill="#9c9aac" stroke="#1e1c28" stroke-width="0.7"/>
<path d="M101 347 Q106 346 109 347.5 L104 348.5 Z" fill="#d0d0dc"/>
<rect x="95" y="350.2" width="22.8" height="6.6" fill="#c88428"/>
<rect x="95.5" y="351.3" width="21.8" height="4.2" fill="#6a6482"/>
<path d="M95.7 356.8 L103.7 356.8 L103.7 365 L105 372.7 L100 372.7 L96 368 Z" fill="#9c9cae" stroke="#1e1c28" stroke-width="0.7"/>
<path d="M99.7 356.8 L102.5 356.8 L103 362 L102 366 L104.5 372.7 L101.5 372.7 L100 367 L101 362 Z" fill="#e0a020"/>
<path d="M103.7 357.3 L114 357.3 L117.7 360.7 L117.7 371 L114 372.7 L104.5 372.7 L103.7 366 Z" fill="#17171d"/>
<path d="M114.3 361 L117.7 360.7 L117.7 371.5 L114.5 372.5 Z" fill="#55526a"/>
<path d="M111.2 352 L115.2 352 L115.5 362 L113 363.5 L111 361 Z" fill="#c88428"/>
<path d="M112 353.5 L114.6 353.5 L114.6 360.5 L113 361.8 L112 360 Z" fill="#7a7490"/>
<circle cx="113.3" cy="354.3" r="1.5" fill="#40c8f0"/>
</g><g transform="translate(38.20,434.34) scale(0.36)">
<path d="M80 403.3 L103.3 396.5 L111.7 420 L111 426 L91.7 426 Z" fill="#d89028" stroke="#3a2008" stroke-width="0.8"/>
<path d="M80 403.3 L103.3 396.5 L104 399" stroke="#f8c060" stroke-width="1" fill="none"/>
<path d="M84.2 405 L100.8 400 L107.5 420.8 L106.5 426 L92.5 426 Z" fill="#9492a6" stroke="#3a2a1a" stroke-width="0.6"/>
<path d="M92.5 402.5 L99.5 426" stroke="#7a788a" stroke-width="0.9"/>
<path d="M84.6 405.3 L92.5 402.8 L99 426 L92.8 426 Z" fill="#a8a6b8"/>
<circle cx="96.7" cy="407.5" r="2" fill="#d08a28"/>
<circle cx="100" cy="415" r="2" fill="#d08a28"/>
</g><g transform="translate(72,596.7)"><path d="M-4 -5 L4 5" stroke="#b07a30" stroke-width="1.8"/><path d="M-5 -6 L-2.5 -3" stroke="#aaa" stroke-width="2"/></g></svg>
<div class="a" style="left:179px;top:419px;width:518px;height:181px;background:#363636"></div>
<div class="a" style="left:180px;top:420px;width:515px;height:180px;background:#2a2a2a"></div>
<div class="a" style="left:180px;top:437px;width:515px;height:163px;background:#222222"></div>
<div class="a" style="left:180px;top:436px;width:515px;height:1px;background:#1e1e1e"></div>
<div class="t" style="left:185.5px;top:423px;font-size:10.5px;font-weight:bold">UIR Dynamic Atlas Page 3</div>
<div class="a" style="left:577px;top:420px;width:28px;height:16px;background:#3a3a3a"></div>
<div class="a" style="left:577px;top:420px;width:1px;height:16px;background:#1e1e1e"></div>
<div class="t" style="left:577px;width:28px;text-align:center;top:424px;font-size:10px;font-weight:bold">RGB</div>
<div class="a" style="left:605px;top:420px;width:1px;height:16px;background:#1e1e1e"></div>
<div class="t" style="left:605px;width:24px;text-align:center;top:424px;font-size:10px;font-weight:bold">R</div>
<div class="a" style="left:629px;top:420px;width:1px;height:16px;background:#1e1e1e"></div>
<div class="t" style="left:629px;width:22px;text-align:center;top:424px;font-size:10px;font-weight:bold">G</div>
<div class="a" style="left:651px;top:420px;width:1px;height:16px;background:#1e1e1e"></div>
<div class="t" style="left:651px;width:23px;text-align:center;top:424px;font-size:10px;font-weight:bold">B</div>
<div class="a" style="left:674px;top:420px;width:1px;height:16px;background:#1e1e1e"></div>
<div class="t" style="left:674px;width:22px;text-align:center;top:424px;font-size:10px;font-weight:bold">A</div>
<div class="a" style="left:180px;top:535px;width:515px;height:65px;background:#000"></div>
<svg width="850" height="600"><rect x="180" y="557" width="294" height="33" fill="#ffffff"/><path d="M185 557 L207 557 L212 562 L212 585 L207 590 L185 590 L180 585 L180 562 Z" fill="#2a1c12"/><rect x="180" y="564" width="2.5" height="14" fill="#d82010"/><rect x="186" y="560" width="22" height="5" fill="#4a4650"/><rect x="184" y="580" width="24" height="6" fill="#3a2818"/><g transform="translate(129.20,513.10) scale(0.7)">
<path d="M86 76 Q84 72 89 70.5 L92 68 Q99 66 106 68 L107 71.5 Q110 75 109.5 82 L108.5 92 Q106 101.8 98 101.8 Q89 101.5 87.5 94 L86.5 88 Z" fill="#4a2606"/>
<path d="M95 71 L106 70.5 Q109 74 109 82 Q101 86 96 83 Z" fill="#c48a3c"/>
<path d="M97 73 L103 72.5 L105 79 L99.5 80 Z" fill="#dcaa60" opacity="0.8"/>
<path d="M86.5 82 Q97 90 109 82 L108.6 87.5 Q97 95 87 87.5 Z" fill="#6a3a10"/>
<path d="M87.4 88.5 Q97 94 108.3 88.5 L107.3 94 Q105 100.8 98 100.8 Q90.5 100.5 88.8 94.5 Z" fill="#dc8a20"/>
<path d="M92 92 Q94 97 97 98 Q93 99 91 96 Z" fill="#f8c878"/>
<path d="M89 86 Q97 91 107 86" stroke="#f0b050" stroke-width="0.8" fill="none"/>
<path d="M84.5 76.5 Q85 71.5 91 70.5 L97.5 71.5 L98 79.5 Q94 83 91 84 L86 83.5 Z" fill="#a4a4b2"/>
<path d="M91 70.5 L97.5 71.5 L98 79.5 Q95 81 93 80 Z" fill="#c8c8d4"/>
<path d="M86 77 Q86.5 73.5 90 74 Q92.2 76 91.8 81 Q90.5 83.8 87 83.2 Z" fill="#141418"/>
<ellipse cx="99" cy="69.3" rx="7.6" ry="2.6" fill="#b4b4c0"/>
<ellipse cx="99" cy="69" rx="6" ry="1.5" fill="#18181c"/>
<circle cx="104.8" cy="81.6" r="2.7" fill="#c8a050"/>
<circle cx="104.8" cy="81.6" r="2.1" fill="#3ab8e8"/>
<circle cx="104.2" cy="81" r="0.8" fill="#a8ecff"/>
</g><path d="M218 572 L230 561 L245 576 L233 590 Z" fill="#b83c10"/><path d="M218 572 L228 563 L232 569 L224 580 Z" fill="#4a1a08"/><path d="M224 563 L232 559 L236 566 L238 575 L232 580 L226 577 Z" fill="#d89a2a"/><path d="M227 568 L236 568 L237 574 L231 578 L226 575 Z" fill="#eeb848"/><rect x="246" y="557" width="14" height="33" fill="#dcd8ea"/><path d="M256 558 L274 558 L278 562 L278 586 L274 590 L256 590 L252 586 L252 562 Z" fill="#38323e"/><rect x="247" y="577" width="6" height="12" fill="#f4f2f8"/><g transform="translate(212.00,475.48) scale(0.72)"><path d="M72 131 L89 161" stroke="#2a1608" stroke-width="5.800000000000001" stroke-linecap="round"/><path d="M72 131 L89 161" stroke="#a8681c" stroke-width="4.4" stroke-linecap="round"/><path d="M72.4 130.5 L89.4 160.5" stroke="#d8953a" stroke-width="1.1" stroke-linecap="round"/><path d="M69.5 131.5 L75.5 128" stroke="#d89a30" stroke-width="3" stroke-linecap="butt"/><path d="M79.8 153.5 L85.3 150.3" stroke="#a0a0b0" stroke-width="2.2" stroke-linecap="butt"/><path d="M82.8 157 L87.5 154" stroke="#c09050" stroke-width="3" stroke-linecap="butt"/><path d="M85.5 160.5 L90.5 157.5" stroke="#b8b8c4" stroke-width="2.6" stroke-linecap="butt"/>
<path d="M64.2 116.3 L68.6 121.8 L64.6 122.6 Z" fill="#c8c8d4"/>
<path d="M68 123.5 L83.5 124.5 L76 129.8 L70 131 Z" fill="#5a5468"/>
<path d="M68 123.5 L83.5 124.5 L80 126" stroke="#c8c8d8" stroke-width="1" fill="none"/>
<path d="M72.5 125.2 L78.5 125.6 L74.5 128.5 Z" fill="#c88a2c"/>
<path d="M50.7 131.6 L64.7 126 L69.3 128.3 L71.2 149.3 L61.9 145.6 L58 142 L55.5 141.5 L54.4 140 L53 137.5 L51.5 135.5 L52.5 134.5 Z" fill="#d6d2e2" stroke="#2a2636" stroke-width="0.6"/>
<path d="M56.7 130.7 L66 128.3 L68.4 142.8 L61.9 141.9 L58.1 136.3 Z" fill="#4a4558"/>
<path d="M59.8 130.8 L65.3 129.6 L66.2 138.6 L61.2 138.2 Z" fill="#c88a2c"/>
<path d="M65 122.5 Q69 120.5 72.8 123 L71.8 126.8 L66 126.2 Z" fill="#d89a30"/>
<circle cx="69.8" cy="127" r="2.3" fill="#2a2a3a"/>
<circle cx="69.8" cy="127" r="1.7" fill="#40c8f0"/>
</g><path d="M283 557 L306 557 L311 562 L311 585 L306 590 L283 590 L278 585 L278 562 Z" fill="#2e2a34"/><rect x="300" y="557" width="10" height="4" fill="#fff"/><rect x="290" y="583" width="10" height="7" fill="#e8e6ee"/><g transform="translate(196.00,440.00) scale(0.7)"><path d="M137 188 L162.5 211.5" stroke="#2a1608" stroke-width="5.800000000000001" stroke-linecap="round"/><path d="M137 188 L162.5 211.5" stroke="#a8681c" stroke-width="4.4" stroke-linecap="round"/><path d="M137.4 187.5 L162.9 211.0" stroke="#d8953a" stroke-width="1.1" stroke-linecap="round"/><path d="M134.5 189.5 L140.5 185.5" stroke="#d89a30" stroke-width="3" stroke-linecap="butt"/><path d="M154 205.5 L158.5 201.5" stroke="#a0a0b0" stroke-width="2.4" stroke-linecap="butt"/><path d="M156.5 208.5 L161 204.5" stroke="#c09050" stroke-width="3" stroke-linecap="butt"/><path d="M159.5 211.5 L164 207.5" stroke="#b8b8c4" stroke-width="2.6" stroke-linecap="butt"/>
<path d="M126 176.8 L130.7 179.9 L129 181.6 Z" fill="#c8c8d4"/>
<path d="M136.4 179.9 L144.2 171.2 L146 173 L148.1 174.7 L150 176.5 L153.3 180.7 L154 185 L155.9 193.7 L150.7 189.4 L144.6 186.8 L139.4 186.8 Z" fill="#d6d2e2" stroke="#2a2636" stroke-width="0.6"/>
<path d="M137.2 180.7 L142 176.4 L147.2 179.9 L149.8 187.7 L143.7 186.4 L139 185.9 Z" fill="#4a4558"/>
<path d="M139 180.7 L142.4 178.1 L146.8 183.3 L146.3 185.9 L141.1 184.2 Z" fill="#c88a2c"/>
<path d="M119.9 196.3 L127.3 188.5 L132.5 185.5 L136.8 190.3 L139.4 198.9 L143.7 206.7 L133.3 204.1 L128 202.5 L124.7 200.7 L122 198.5 Z" fill="#d6d2e2" stroke="#2a2636" stroke-width="0.6"/>
<path d="M125.1 193.7 L132.5 187.7 L136.8 192 L138.5 201.5 L130.7 198.9 L126.4 196.3 Z" fill="#4a4558"/>
<path d="M127.3 192.9 L131.6 189.4 L134.6 192 L135.5 198.1 L129.9 195.5 Z" fill="#c88a2c"/>
<path d="M129.5 181 Q133 178.5 136.5 180.5 L138.5 188 L135 190.5 L131 187 Z" fill="#d89a30"/>
<circle cx="135.1" cy="185.5" r="2.3" fill="#2a2a3a"/>
<circle cx="135.1" cy="185.5" r="1.7" fill="#40c8f0"/>
</g><path d="M313 560 L330 560 L335 566 L330 578 L313 578 Z" fill="#d6d4de"/><path d="M313 578 L328 578 L328 590 L318 590 L313 585 Z" fill="#6a6878"/><path d="M329 568 L341 568 L344 571 L344 587 L341 590 L329 590 L326 587 L326 571 Z" fill="#38323e"/><rect x="327" y="580" width="14" height="9" fill="#d08a28"/><g transform="translate(221.00,322.00) scale(1.0)">
<path d="M98 241.1 L99.5 240.6 L105.7 242.2 L111.8 249.3 L104.7 256.5 L98.8 250.6 L97.8 248.3 Z" fill="#d0d0dc" stroke="#2a2636" stroke-width="0.7"/>
<path d="M99 241.5 L105.4 243 L106 245 L100.5 244.2 Z" fill="#f4f4fa"/>
<path d="M100.9 245.1 L104.7 245.6 L109.5 250.9 L105.7 254.7 L101.5 250.4 Z" fill="#b8782a"/>
<path d="M103 247 L105 247.5 L107.5 251 L105.5 253 Z" fill="#e0a040"/>
<path d="M110.5 257.3 L114.5 261.3" stroke="#2a2018" stroke-width="3.8"/>
<path d="M111 257.8 L114 260.8" stroke="#7a6040" stroke-width="1" stroke-dasharray="1 1"/>
<path d="M102.5 257.3 L113.2 249.3 L115.6 251.7 L104.7 259.8 Z" fill="#d89028"/>
<circle cx="108.1" cy="253.9" r="1.4" fill="#4090e0"/>
<path d="M112.1 262 L115.5 259.3 L118.2 262.5 L115 265.4 Z" fill="#e09a30"/>
</g><path d="M349 557 L372 557 L377 562 L377 585 L372 590 L349 590 L344 585 L344 562 Z" fill="#2a2630"/><rect x="346" y="567" width="10" height="12" fill="#8a8898"/><rect x="360" y="582" width="14" height="7" fill="#6a6878"/><g transform="translate(276.28,358.12) scale(0.72)"><path d="M117 295 L133 321" stroke="#2a1608" stroke-width="6.0" stroke-linecap="round"/><path d="M117 295 L133 321" stroke="#a8681c" stroke-width="4.6" stroke-linecap="round"/><path d="M117.4 294.5 L133.4 320.5" stroke="#d8953a" stroke-width="1.1" stroke-linecap="round"/><path d="M116 297 L122 293.5" stroke="#d89a30" stroke-width="3" stroke-linecap="butt"/><path d="M125 312.5 L130 309.5" stroke="#a0a0b0" stroke-width="2.4" stroke-linecap="butt"/><path d="M129.5 320.5 L135 317.5" stroke="#b8b8c4" stroke-width="3" stroke-linecap="butt"/>
<path d="M111.5 279 L114.7 283.5 L110.6 284 Z" fill="#c8c8d4"/>
<path d="M110 284.5 Q114 282.5 117.5 284 L118 288 L111 289 Z" fill="#d89a30"/>
<path d="M100.5 292 L113 287.5 L116 297.5 L106 304 L101.5 300 Z" fill="#b4b2c4" stroke="#24222e" stroke-width="0.8"/>
<path d="M101 292.3 L112.8 288 L113.6 290.4 L102 294.6 Z" fill="#dcdce8"/>
<path d="M118 285 L125 282.8 L130.2 283.5 L132 293 L121 297 Z" fill="#b4b2c4" stroke="#24222e" stroke-width="0.8"/>
<path d="M118.4 285.2 L125 283.2 L130 283.8 L119 287.6 Z" fill="#dcdce8"/>
<path d="M112.5 287 L119 284.5 L122 296 L115.5 298.5 Z" fill="#4a4858" stroke="#24222e" stroke-width="0.6"/>
<path d="M104.5 293.5 L110.5 291.5 L112 297 L106.5 299 Z" fill="#d08a28"/>
<path d="M120.5 287.5 L126 285.8 L127.2 290.8 L122 292.5 Z" fill="#d08a28"/>
<circle cx="116" cy="290.7" r="2.2" fill="#2a2a3a"/>
<circle cx="116" cy="290.7" r="1.6" fill="#40c8f0"/>
</g><path d="M384 557 L402 557 L408 563 L408 584 L402 590 L384 590 L378 584 L378 563 Z" fill="#2a2630"/><rect x="398" y="574" width="10" height="10" fill="#b8a8a0"/><g transform="translate(303.25,269.15) scale(0.85)">
<path d="M102 348 L102.5 343 L105 347.5 L108.3 341 L110 347 L113.3 342.7 L113 348 Z" fill="#a8a8b8"/>
<path d="M97.5 350.5 Q99 345.5 106.5 345.8 Q115 346 117 350.5 Z" fill="#9c9aac" stroke="#1e1c28" stroke-width="0.7"/>
<path d="M101 347 Q106 346 109 347.5 L104 348.5 Z" fill="#d0d0dc"/>
<rect x="95" y="350.2" width="22.8" height="6.6" fill="#c88428"/>
<rect x="95.5" y="351.3" width="21.8" height="4.2" fill="#6a6482"/>
<path d="M95.7 356.8 L103.7 356.8 L103.7 365 L105 372.7 L100 372.7 L96 368 Z" fill="#9c9cae" stroke="#1e1c28" stroke-width="0.7"/>
<path d="M99.7 356.8 L102.5 356.8 L103 362 L102 366 L104.5 372.7 L101.5 372.7 L100 367 L101 362 Z" fill="#e0a020"/>
<path d="M103.7 357.3 L114 357.3 L117.7 360.7 L117.7 371 L114 372.7 L104.5 372.7 L103.7 366 Z" fill="#17171d"/>
<path d="M114.3 361 L117.7 360.7 L117.7 371.5 L114.5 372.5 Z" fill="#55526a"/>
<path d="M111.2 352 L115.2 352 L115.5 362 L113 363.5 L111 361 Z" fill="#c88428"/>
<path d="M112 353.5 L114.6 353.5 L114.6 360.5 L113 361.8 L112 360 Z" fill="#7a7490"/>
<circle cx="113.3" cy="354.3" r="1.5" fill="#40c8f0"/>
</g><path d="M416 557 L435 557 L442 564 L442 583 L435 590 L416 590 L409 583 L409 564 Z" fill="#3a3848"/><path d="M416 557 L435 557 L442 564 L442 572 L409 580 L409 564 Z" fill="#6a2c12"/><rect x="430" y="565" width="12" height="8" fill="#b8b0c0"/><path d="M418 559 L432 559 L440 580 L428 589 L420 580 Z" fill="#e09a30"/><path d="M421 563 L430 562 L436 579 L428 586 L423 579 Z" fill="#8c8a9e"/><circle cx="427" cy="569" r="1.5" fill="#d08a28"/><circle cx="429" cy="575" r="1.5" fill="#d08a28"/><path d="M447 557 L469 557 L474 562 L474 585 L469 590 L447 590 L442 585 L442 562 Z" fill="#1e1a1c"/><rect x="469" y="557" width="5" height="12" fill="#fff"/><path d="M466 579 L474 575 L474 590 L460 590 Z" fill="#5a5868"/><path d="M448 559 L452 558 L462 568 L458 574 L450 567 Z" fill="#d89a2a"/><path d="M456 570 L470 585" stroke="#c88a2c" stroke-width="2.5"/><circle cx="454" cy="567" r="1.4" fill="#40c8f0"/><path d="M182 598 L184.5 594 L187 598 Z M188 594 L193 594 L190.5 598 Z" fill="#ddd"/></svg>
</div></body></html>
